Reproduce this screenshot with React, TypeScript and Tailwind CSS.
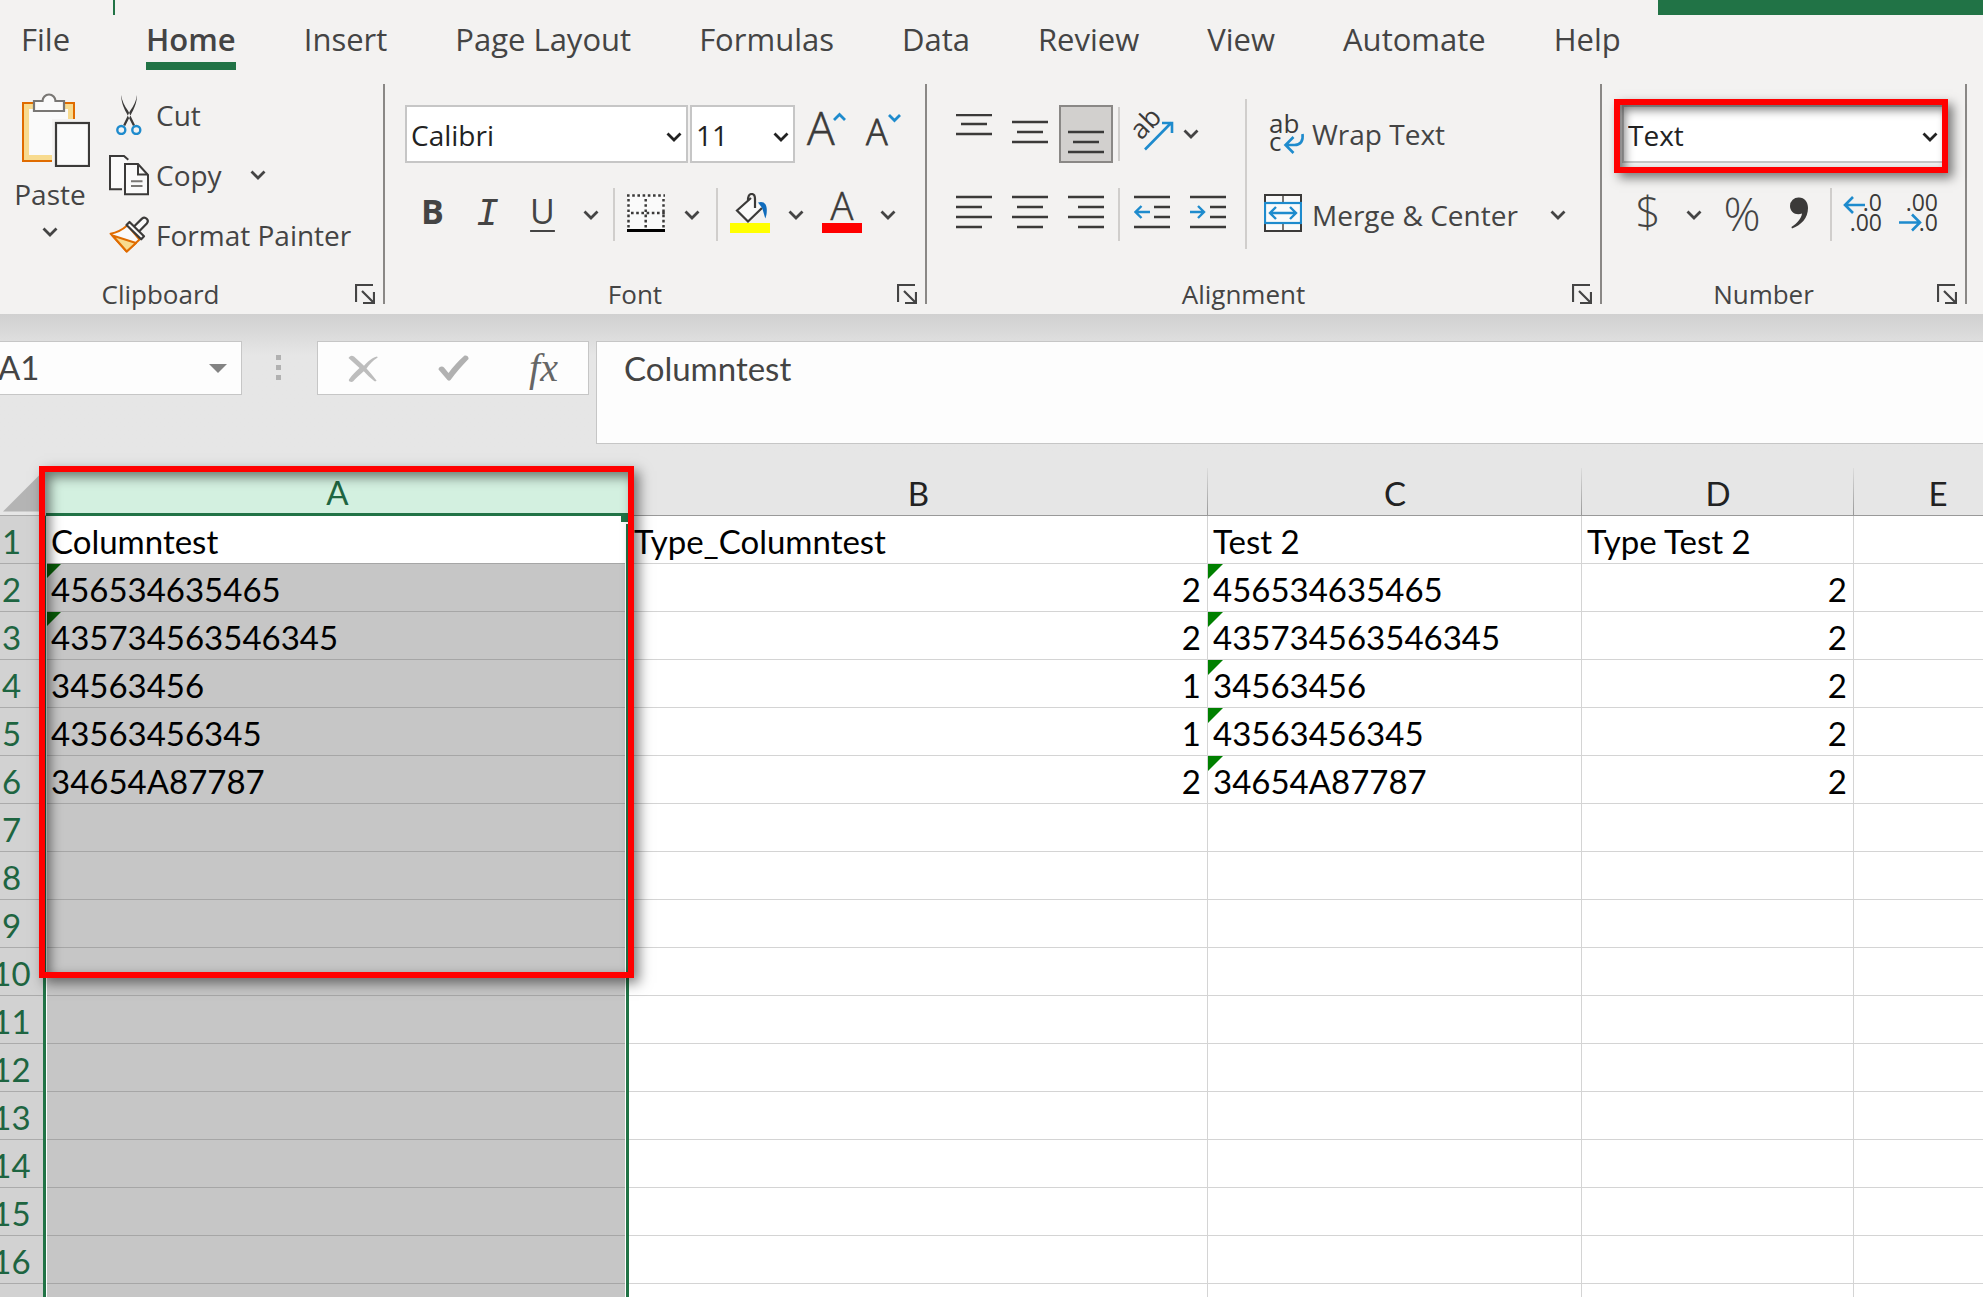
import React, { useState } from 'react';
import { clsx } from 'clsx';

interface RowData {
  a?: string;
  b?: string;
  c?: string;
  d?: string;
  flagA?: boolean;
  flagC?: boolean;
}

const tabs = ['File', 'Home', 'Insert', 'Page Layout', 'Formulas', 'Data', 'Review', 'View', 'Automate', 'Help'];

const filled: RowData[] = [
  { a: 'Columntest', b: 'Type_Columntest', c: 'Test 2', d: 'Type Test 2' },
  { a: '456534635465', b: '2', c: '456534635465', d: '2', flagA: true, flagC: true },
  { a: '435734563546345', b: '2', c: '435734563546345', d: '2', flagA: true, flagC: true },
  { a: '34563456', b: '1', c: '34563456', d: '2', flagC: true },
  { a: '43563456345', b: '1', c: '43563456345', d: '2', flagC: true },
  { a: '34654A87787', b: '2', c: '34654A87787', d: '2', flagC: true },
];

const rows: RowData[] = Array.from({ length: 17 }, (_, i) => filled[i] ?? {});

const DARK = '#3b3a39';
const BLUE = '#1e8bcd';

/* ---------- icons ---------- */

const Chevron = () => (
  <svg width="16" height="10" viewBox="0 0 16 10" fill="none" stroke="currentColor" strokeWidth="2.8">
    <path d="M1.5 1.5 8 8l6.5-6.5" />
  </svg>
);

const Launcher = () => (
  <svg width="20" height="20" viewBox="0 0 20 20" fill="none" stroke="#444" strokeWidth="2.2">
    <path d="M1 18V1h17M7 7l11 11M19 8v11H8" />
  </svg>
);

const PasteIcon = () => (
  <svg width="68" height="75" viewBox="0 0 68 75" fill="none">
    <rect x="1" y="11" width="51" height="58" fill="#fafafa" stroke="#e06c00" strokeWidth="2" />
    <rect x="4.500" y="14.500" width="44" height="51" stroke="#f8db8f" strokeWidth="5" />
    <path d="M12 9h8.500a6.500 6.500 0 0 1 13 0H42v10H12z" fill="#fafafa" stroke="#797774" strokeWidth="2.200" />
    <path d="M30 27h38v48H30z" fill="#f3f2f1" />
    <rect x="34" y="31" width="33" height="43" fill="#fafafa" stroke={DARK} strokeWidth="2.200" />
  </svg>
);

const CutIcon = () => (
  <svg width="40" height="40" viewBox="0 0 40 40" fill="none">
    <path d="M12.200 0c.6 5 3 11 7 16l6.800 14-2 1-6.500-13C14 12 12 5 12.200 0zM28 0c-.6 5-3 11-7 16l-6.800 14 2 1 6.500-13C26.200 12 28.200 5 28 0z" fill={DARK} />
    <circle cx="12.300" cy="35" r="4" stroke={BLUE} strokeWidth="2.400" />
    <circle cx="27.300" cy="35" r="4" stroke={BLUE} strokeWidth="2.400" />
  </svg>
);

const CopyIcon = () => (
  <svg width="40" height="41" viewBox="0 0 40 41" fill="none" stroke={DARK} strokeWidth="2">
    <path d="M19.300 4.800 15 1H1v33.300h12" fill="#fafafa" />
    <path d="M16 9h13l10 11v19.300H16z" fill="#fafafa" />
    <path d="M29 9v10.500h10" />
    <path d="M22 26.300h11.500M22 31h11.500" stroke="#797774" />
  </svg>
);

const PainterIcon = () => (
  <svg width="40" height="38" viewBox="0 0 40 38" fill="none" strokeLinejoin="round">
    <path d="M1.500 17.700c7-1 12-4 17-8.400l12 14.200L17.700 35.500z" fill="#fafafa" stroke="#e06c00" strokeWidth="2" />
    <path d="M3.500 19.500 27 27l-9.300 8.500z" fill="#f8db8f" stroke="#e06c00" strokeWidth="2" />
    <path d="M25 10.500 33 2.600a3.400 3.400 0 0 1 4.800 4.800L30.500 15" fill="#fafafa" stroke={DARK} strokeWidth="2.200" />
    <path d="m20.500 6 14.500 14.300-2.800 3L17.500 9z" fill="#fafafa" stroke={DARK} strokeWidth="2.200" />
  </svg>
);

const GrowFontIcon = () => (
  <svg width="42" height="40" viewBox="0 0 42 40" className="overflow-visible">
    <text x="0" y="36" fontSize="46" fontWeight="300" fill={DARK} stroke={DARK} strokeWidth="0.600">A</text>
    <path d="m27 11 5.500-5.500L38 11" fill="none" stroke={BLUE} strokeWidth="2.800" />
  </svg>
);

const ShrinkFontIcon = () => (
  <svg width="42" height="40" viewBox="0 0 42 40" className="overflow-visible">
    <text x="1" y="36" fontSize="36" fontWeight="300" fill={DARK} stroke={DARK} strokeWidth="0.800">A</text>
    <path d="m24 6 5.500 5.500L35 6" fill="none" stroke={BLUE} strokeWidth="2.800" />
  </svg>
);

const BordersIcon = () => (
  <svg width="38" height="38" viewBox="0 0 38 38" fill="none" stroke={DARK} strokeWidth="2.500">
    <path d="M0 0h38v36H0z" fill="#fafafa" stroke="none" />
    <path d="M0 1.500h38M4 19h34" strokeDasharray="2.600 2.600" />
    <path d="M1.500 5v30M18.700 5v30M36.500 5v30" strokeDasharray="2.600 2.600" />
    <path d="M0 36.500h38" stroke="#000" strokeWidth="3" />
  </svg>
);

const FillIcon = () => (
  <svg width="40" height="40" viewBox="0 0 40 40" fill="none" stroke={DARK} strokeWidth="2.200">
    <path d="M21 5 7 17.500 18 28.500l14-13.500" fill="#fafafa" />
    <path d="M18 7.500c0-4 1-6.500 3.700-6.500s3.300 2 3.300 5v9" />
    <path d="M28 9.500c6-2 9 2 8.800 8 0 3-.5 5.500-1.500 8-1-3-1.500-6-3.500-11z" fill="#0f6cbd" stroke="none" />
    <path d="M0 30h40v10H0z" fill="#ff0" stroke="none" />
  </svg>
);

const FontColorIcon = () => (
  <svg width="40" height="40" viewBox="0 0 40 40" className="overflow-visible">
    <text x="20" y="27" fontSize="38" fontWeight="300" textAnchor="middle" fill={DARK} stroke={DARK} strokeWidth="0.600">A</text>
    <path d="M0 30h40v10H0z" fill="red" />
  </svg>
);

const LinesIcon = ({ d }: { d: string }) => (
  <svg width="36" height="40" viewBox="0 0 36 40" fill="none" stroke={DARK} strokeWidth="2.400">
    <path d={d} />
  </svg>
);

const IndentIcon = ({ arrow }: { arrow: string }) => (
  <svg width="36" height="40" viewBox="0 0 36 40" fill="none" stroke={DARK} strokeWidth="2.400">
    <path d="M0 4h36M20 14h16M20 24h16M0 34h36" />
    <path d={arrow} stroke={BLUE} />
  </svg>
);

const OrientationIcon = () => (
  <svg width="42" height="42" viewBox="0 0 42 42" fill="none" className="overflow-visible">
    <text transform="translate(10 30) rotate(-46)" fontSize="27" fill={DARK}>ab</text>
    <path d="m14 38.500 26.500-27M31 12h10v10" stroke={BLUE} strokeWidth="2.600" />
  </svg>
);

const WrapIcon = () => (
  <svg width="40" height="40" viewBox="0 0 40 40" fill="none" className="overflow-visible">
    <text x="5" y="19" fontSize="26" fill={DARK}>ab</text>
    <text x="5" y="37" fontSize="26" fill={DARK}>c</text>
    <path d="M38.500 20c1 7-2 11-8 11h-9M29.500 23l-8 8 8 8" stroke={BLUE} strokeWidth="2.600" />
  </svg>
);

const MergeIcon = () => (
  <svg width="38" height="38" viewBox="0 0 38 38" fill="none">
    <rect x="1" y="1" width="36" height="36" fill="#fafafa" stroke={DARK} strokeWidth="2" />
    <path d="M19 2v6M19 30v6" stroke="#797774" strokeWidth="2" />
    <rect x="1" y="9" width="36" height="20" fill="#fafafa" stroke={BLUE} strokeWidth="2.200" />
    <path d="M6 19h26M12 13l-6 6 6 6M26 13l6 6-6 6" stroke={BLUE} strokeWidth="2.400" />
  </svg>
);

const CommaIcon = () => (
  <svg width="20" height="32" viewBox="0 0 20 32" fill={DARK}>
    <path d="M1 9a8.500 8.500 0 0 1 9-8.500c5.500 0 9 4.500 9 10.500 0 10-6.500 17-16 20.500l-.6-1.600C8.500 26.500 12.500 21 13 16.500 7 19 1 15 1 9z" />
  </svg>
);

const DecimalIcon = ({ more }: { more: boolean }) => (
  <svg width="38" height="38" viewBox="0 0 38 38" fill="none" className="overflow-visible">
    <text x="39" y="17" fontSize="23" textAnchor="end" fill={DARK}>{more ? '.0' : '.00'}</text>
    <text x="39" y="37" fontSize="23" textAnchor="end" fill={DARK}>{more ? '.00' : '.0'}</text>
    <path
      d={more ? 'M2 11h20M10 3l-8 8 8 8' : 'M0 28.500h20M13 20.500l8 8-8 8'}
      stroke={BLUE}
      strokeWidth="2.600"
    />
  </svg>
);

const ErrorFlag = ({ dark }: { dark: boolean }) => (
  <svg width="15" height="15" viewBox="0 0 15 15" className="absolute left-0 top-0">
    <path d="M0 0h15L0 15z" fill={dark ? '#085c08' : '#008000'} />
  </svg>
);

/* ---------- ribbon parts ---------- */

interface ToolProps {
  label: string;
  className?: string;
  children: React.ReactNode;
}

const Tool: React.FC<ToolProps> = ({ label, className, children }) => (
  <button aria-label={label} className={clsx('flex shrink-0 items-center justify-center', className)}>
    {children}
  </button>
);

const Divider = ({ className }: { className?: string }) => (
  <div className={clsx('w-0.5 shrink-0 bg-[#d0cecc]', className)} />
);

interface GroupProps {
  title: string;
  className?: string;
  children: React.ReactNode;
}

const Group: React.FC<GroupProps> = ({ title, className, children }) => (
  <section className={clsx('flex h-[220px] shrink-0 flex-col justify-between border-r-2 border-[#8a8886]', className)}>
    <div className="flex">{children}</div>
    <div className="flex h-5 items-center pr-2">
      <h2 className="flex-1 text-center text-[26px] leading-5">{title}</h2>
      <button aria-label={`${title} settings`} className="ml-3">
        <Launcher />
      </button>
    </div>
  </section>
);

interface PickerProps {
  label: string;
  options: string[];
  className?: string;
  framed?: boolean;
}

const Picker: React.FC<PickerProps> = ({ label, options, className, framed }) => (
  <div className={clsx('relative h-[58px] shrink-0', className)}>
    <select
      aria-label={label}
      className="h-full w-full appearance-none border-2 border-[#c6c6c6] bg-white pl-1 pt-0.5 text-[28px] text-[#222]"
    >
      {options.map((o) => (
        <option key={o}>{o}</option>
      ))}
    </select>
    <span className="pointer-events-none absolute right-1.5 top-[27px] text-[#222]">
      <Chevron />
    </span>
    {framed && (
      <div className="pointer-events-none absolute -bottom-2.5 -left-2 -right-1 -top-1.5 border-6 border-[#f00] shadow-[5px_5px_10px_rgba(0,0,0,0.5),inset_5px_5px_10px_rgba(0,0,0,0.5)]" />
    )}
  </div>
);

const Ribbon = () => {
  const [activeTab, setActiveTab] = useState('Home');

  return (
    <header className="bg-[#f3f2f1] text-[#444]">
      {/* Bottom of the title bar */}
      <div className="flex h-[15px] justify-between">
        <div className="ml-[113px] w-0.5 bg-[#217346]" />
        <div className="w-[325px] bg-[#217346]" />
      </div>

      <nav className="flex gap-[68px] overflow-hidden pl-[21px] pt-[3px]">
        {tabs.map((tab) => (
          <button
            key={tab}
            onClick={() => setActiveTab(tab)}
            className={clsx(
              'flex h-[52px] shrink-0 items-start border-b-8 text-[31px] leading-[42px]',
              tab === 'File' && 'mr-2',
              tab === activeTab ? 'border-[#217346] font-semibold' : 'border-transparent'
            )}
          >
            {tab}
          </button>
        ))}
      </nav>

      <div className="flex overflow-hidden pb-2.5 pt-3.5 text-[28px] leading-[38px]">
        <Group title="Clipboard" className="-ml-[22px] w-[407px]">
          <button className="ml-[34px] flex w-[76px] flex-col items-center pt-2">
            <span className="ml-3">
              <PasteIcon />
            </span>
            <span className="mt-2">Paste</span>
            <span className="mt-3.5">
              <Chevron />
            </span>
          </button>
          <div className="ml-[21px] flex flex-col pt-px">
            <button className="flex h-[60px] items-center gap-[7px]">
              <CutIcon />
              Cut
            </button>
            <div className="flex items-center gap-7">
              <button className="flex h-[60px] items-center gap-[7px]">
                <CopyIcon />
                Copy
              </button>
              <Tool label="Copy options">
                <Chevron />
              </Tool>
            </div>
            <button className="flex h-[60px] items-center gap-[7px]">
              <PainterIcon />
              Format Painter
            </button>
          </div>
        </Group>

        <Group title="Font" className="w-[542px]">
          <div className="flex flex-col gap-[25px] pl-5 pt-[21px]">
            <div className="flex">
              <Picker label="Font name" options={['Calibri', 'Arial']} className="w-[283px]" />
              <Picker label="Font size" options={['11', '12', '14']} className="ml-0.5 w-[105px]" />
              <Tool label="Increase font size" className="ml-3 h-12">
                <GrowFontIcon />
              </Tool>
              <Tool label="Decrease font size" className="ml-4 h-12">
                <ShrinkFontIcon />
              </Tool>
            </div>
            <div className="flex h-[53px]">
              <Tool label="Bold" className="w-[55px] pb-2 text-[34px] font-bold">B</Tool>
              <Tool label="Italic" className="w-[55px] font-['Liberation_Mono',monospace] text-[38px] italic">I</Tool>
              <Tool label="Underline" className="w-[55px] pb-2 text-[34px] underline decoration-2 underline-offset-6">U</Tool>
              <Tool label="Underline options" className="w-[42px]">
                <Chevron />
              </Tool>
              <Divider className="mx-px" />
              <Tool label="Borders" className="w-[60px] pb-1">
                <BordersIcon />
              </Tool>
              <Tool label="Border options" className="w-8">
                <Chevron />
              </Tool>
              <Divider className="ml-2" />
              <Tool label="Fill colour" className="w-16 pb-1">
                <FillIcon />
              </Tool>
              <Tool label="Fill options" className="w-7">
                <Chevron />
              </Tool>
              <Tool label="Font colour" className="w-16 pb-1">
                <FontColorIcon />
              </Tool>
              <Tool label="Font colour options" className="w-7">
                <Chevron />
              </Tool>
            </div>
          </div>
        </Group>

        <Group title="Alignment" className="w-[675px]">
          <div className="flex flex-col gap-[25px] pl-[19px] pt-[21px]">
            <div className="flex h-[58px]">
              <Tool label="Top align" className="w-14">
                <LinesIcon d="M0 1h36M5 10h26M0 20h36" />
              </Tool>
              <Tool label="Middle align" className="w-14">
                <LinesIcon d="M0 8h36M5 18h26M0 28h36" />
              </Tool>
              <Tool label="Bottom align" className="mx-px w-[54px] border-2 border-[#8a8886] bg-[#d2d0ce]">
                <LinesIcon d="M0 18h36M5 28h26M0 38h36" />
              </Tool>
              <Divider className="mx-1 my-0.5" />
              <Tool label="Orientation" className="w-14 pb-1">
                <OrientationIcon />
              </Tool>
              <Tool label="Orientation options" className="w-[22px]">
                <Chevron />
              </Tool>
            </div>
            <div className="flex h-[53px]">
              <Tool label="Align left" className="w-14 pb-1">
                <LinesIcon d="M0 4h36M0 14h26M0 24h36M0 34h26" />
              </Tool>
              <Tool label="Center" className="w-14 pb-1">
                <LinesIcon d="M0 4h36M5 14h26M0 24h36M5 34h26" />
              </Tool>
              <Tool label="Align right" className="w-14 pb-1">
                <LinesIcon d="M0 4h36M10 14h26M0 24h36M10 34h26" />
              </Tool>
              <Divider className="mx-1" />
              <Tool label="Decrease indent" className="w-14 pb-1">
                <IndentIcon arrow="M1.500 19H16M7.500 13l-6 6 6 6" />
              </Tool>
              <Tool label="Increase indent" className="w-14 pb-1">
                <IndentIcon arrow="M0 19h14M8 13l6 6-6 6" />
              </Tool>
            </div>
          </div>
          <Divider className="ml-[9px] mt-[15px] h-[150px]" />
          <div className="flex flex-col gap-[25px] pl-[17px] pt-[21px]">
            <button className="flex h-[58px] items-center gap-2">
              <WrapIcon />
              Wrap Text
            </button>
            <div className="flex h-[53px] items-center gap-8">
              <button className="flex items-center gap-2.5">
                <span className="pb-1">
                  <MergeIcon />
                </span>
                Merge &amp; Center
              </button>
              <Tool label="Merge options">
                <Chevron />
              </Tool>
            </div>
          </div>
        </Group>

        <Group title="Number" className="w-[365px]">
          <div className="flex flex-col gap-[25px] pl-5 pt-[21px]">
            <Picker label="Number format" options={['Text', 'General', 'Number']} className="w-[322px]" framed />
            <div className="flex h-[53px]">
              <Tool label="Currency" className="w-[52px] pb-2 text-[44px] font-light">$</Tool>
              <Tool label="Currency options" className="w-10">
                <Chevron />
              </Tool>
              <Tool label="Percent" className="w-14 pb-1 text-[46px] font-light">%</Tool>
              <Tool label="Comma style" className="w-[58px] pb-1">
                <CommaIcon />
              </Tool>
              <Divider className="mx-0.5" />
              <Tool label="Increase decimal" className="w-14 pb-1">
                <DecimalIcon more />
              </Tool>
              <Tool label="Decrease decimal" className="w-14 pb-1">
                <DecimalIcon more={false} />
              </Tool>
            </div>
          </div>
        </Group>
      </div>
    </header>
  );
};

/* ---------- formula bar ---------- */

const FormulaBar = () => (
  <div className="bg-linear-to-b from-[#d0d0d0] to-[#e6e6e6] to-30% font-['Lato',sans-serif]">
    <div className="flex items-start pb-2 pt-[27px] text-[33px] text-[#444]">
      <div className="flex h-[54px] w-[242px] shrink-0 items-center border border-l-0 border-[#c6c6c6] bg-[#fdfdfd] pr-3.5">
        <input aria-label="Name box" defaultValue="A1" className="-ml-0.5 w-full min-w-0 bg-transparent outline-none" />
        <svg width="18" height="9" viewBox="0 0 18 9" className="shrink-0">
          <path d="M0 0h18L9 9z" fill="#838383" />
        </svg>
      </div>
      <div className="ml-[34px] mt-3.5 flex flex-col gap-[5px]">
        <div className="size-[5px] bg-[#b1b1b1]" />
        <div className="size-[5px] bg-[#b1b1b1]" />
        <div className="size-[5px] bg-[#b1b1b1]" />
      </div>
      <div className="ml-9 flex h-[54px] w-[272px] shrink-0 items-center justify-around border border-[#c6c6c6] bg-[#fdfdfd]">
        <Tool label="Cancel">
          <svg width="30" height="27" viewBox="0 0 30 27" fill="#bdbdbd">
            <path d="M.5 3C1.500.8 4-.2 6 1.500l10 9.300C19.500 6.500 24.500 2.500 29 1.500c.8.500.8 1 0 1.600-4 2.400-7.200 6-10.500 10.400 3 3.500 7 8 10 12-.5 1-1.500 1-2.300.5C22 23 19 19.500 15.800 16.300 11.500 20 8 23 5 26.500c-1.500 1-5 0-4-2C4 20 7.500 16.500 11.500 13z" />
          </svg>
        </Tool>
        <Tool label="Enter">
          <svg width="31" height="26" viewBox="0 0 31 26" fill="#b1b1b1">
            <path d="M.5 14.500c0-3 4-4 5.500-2l4.500 5.500C15 12 20 6 26 1c2-1.200 5 .5 4.500 3C24 10.500 18.500 17 12.500 25c-1 1-2 1-3 0z" />
          </svg>
        </Tool>
        <Tool label="Insert function" className="font-['Liberation_Serif',serif] text-[40px] italic leading-10 text-[#666]">
          fx
        </Tool>
      </div>
      <textarea
        aria-label="Formula bar"
        defaultValue="Columntest"
        className="ml-[7px] h-[103px] min-w-0 flex-1 resize-none border border-r-0 border-[#c6c6c6] bg-[#fdfdfd] pl-[27px] pt-1 leading-11 outline-none"
      />
    </div>
  </div>
);

/* ---------- sheet ---------- */

const ColumnHead = ({ name }: { name: string }) => (
  <th className="relative h-12 border-b border-[#999] p-0 pt-0.5 text-center font-normal text-[#222]">
    {name}
    <span className="absolute bottom-0 right-0 top-0 w-px bg-linear-to-b from-[#dcdcdc] to-[#999]" />
  </th>
);

const cell = 'relative h-12 overflow-hidden border-b border-r border-[#d4d4d4] p-0 pl-[5px] pr-1.5 pt-[3px] whitespace-nowrap';

const Sheet = () => (
  <main className="relative flex-1 overflow-hidden bg-[#e6e6e6] pt-4 font-['Lato',sans-serif] text-[33px] leading-11 text-black">
    <table className="-ml-[21px] w-[calc(100%+60px)] table-fixed border-separate border-spacing-0">
      <colgroup>
        <col className="w-[67px]" />
        <col className="w-[583px]" />
        <col className="w-[579px]" />
        <col className="w-[374px]" />
        <col className="w-[272px]" />
        <col />
      </colgroup>
      <thead>
        <tr>
          <th aria-label="Select all" className="h-12 border-b border-[#ababab] p-0 align-top">
            <svg width="67" height="44" viewBox="0 0 67 44">
              <path d="M24 43.500 66 1.500v42z" fill="#b4b4b4" />
            </svg>
          </th>
          <th className="h-12 border-b-3 border-[#217346] bg-[#d3f0e0] p-0 pt-[3px] text-center font-normal leading-[42px] text-[#1e6541]">A</th>
          <ColumnHead name="B" />
          <ColumnHead name="C" />
          <ColumnHead name="D" />
          <ColumnHead name="E" />
        </tr>
      </thead>
      <tbody>
        {rows.map((row, i) => (
          <tr key={i} className="bg-white">
            <th className="h-12 border-b border-[#ababab] bg-[#d2d2d2] p-0 pr-0.5 pt-[3px] text-center font-normal text-[#1e6541]">{i + 1}</th>
            <td className={clsx(cell, i === 0 ? 'bg-white' : 'bg-[#c6c6c6]', 'border-b-[#a6a6a6]')}>
              {row.flagA && <ErrorFlag dark />}
              {row.a}
            </td>
            <td className={clsx(cell, i > 0 && 'text-right')}>{row.b}</td>
            <td className={cell}>
              {row.flagC && <ErrorFlag dark={false} />}
              {row.c}
            </td>
            <td className={clsx(cell, i > 0 && 'text-right')}>{row.d}</td>
            <td className={cell} />
          </tr>
        ))}
      </tbody>
    </table>

    {/* Selection outline of column A with its fill handle */}
    <div className="pointer-events-none absolute bottom-0 left-[43px] top-16 w-[586px] border-x-3 border-[#217346]">
      <div className="h-full border-x border-white" />
      <div className="absolute -right-[3px] top-0 h-2 w-2.5 border-b-2 border-l-2 border-white bg-[#217346]" />
    </div>

    {/* Highlight frame */}
    <div className="pointer-events-none absolute left-[39px] top-3.5 h-[512px] w-[595px] border-6 border-[#f00] shadow-[5px_5px_12px_rgba(0,0,0,0.5),inset_5px_5px_12px_rgba(0,0,0,0.5)]" />
  </main>
);

export default function App() {
  return (
    <div className="flex h-screen flex-col overflow-hidden font-['Open_Sans',sans-serif]">
      <Ribbon />
      <FormulaBar />
      <Sheet />
    </div>
  );
}
